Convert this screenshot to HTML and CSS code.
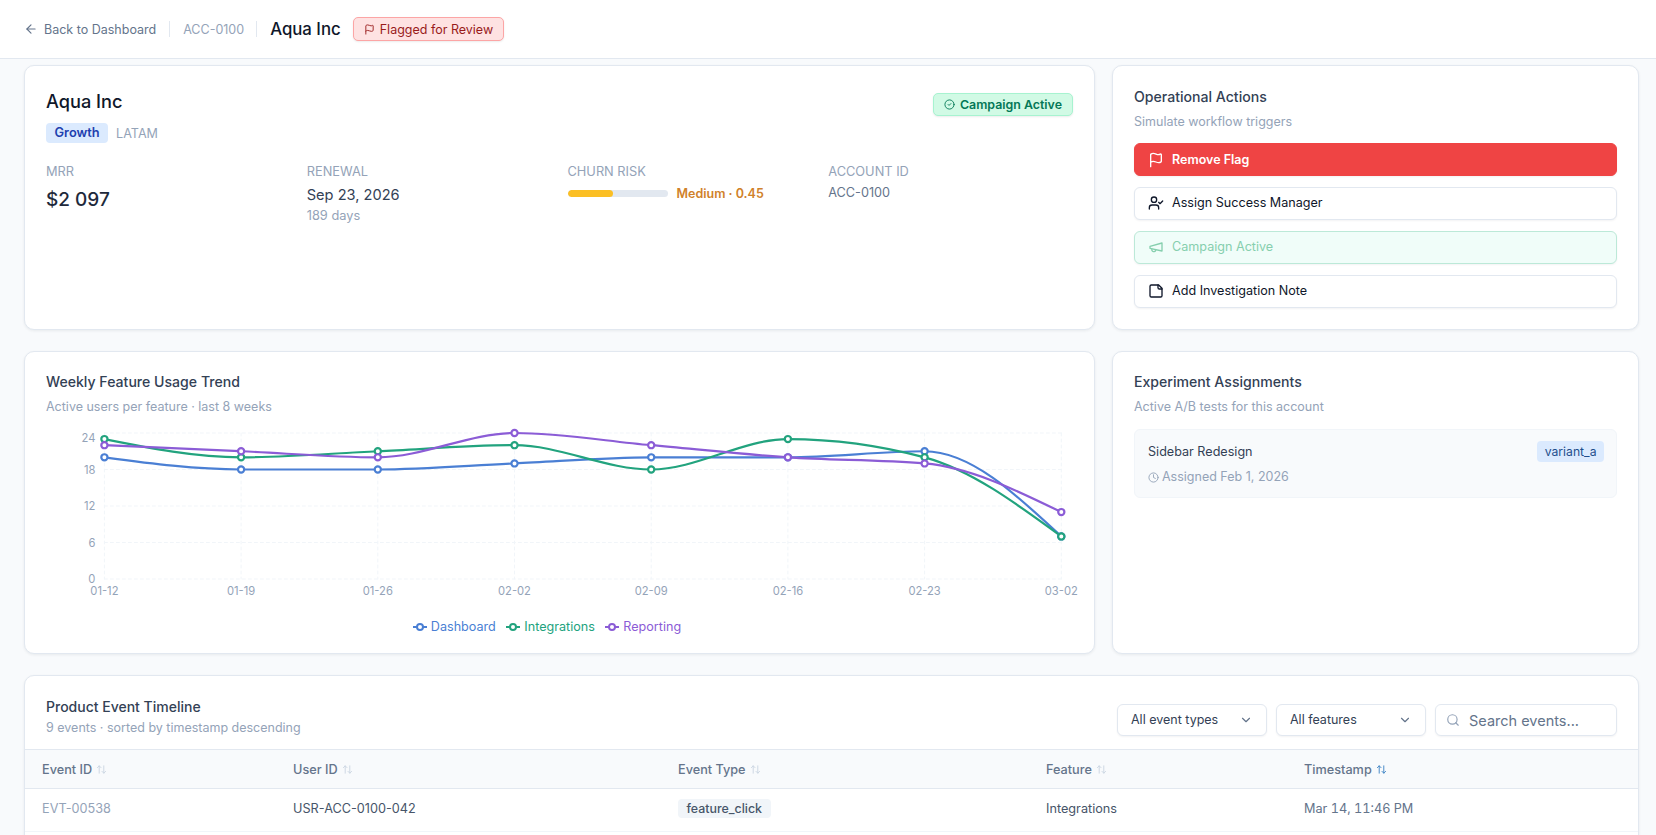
FILE: index.html
```html
<!DOCTYPE html>
<html lang="en">
<head>
<meta charset="utf-8">
<title>Aqua Inc</title>
<link rel="stylesheet" href="styles.css">
</head>
<body>
<div class="app">
  <header class="topbar">
    <a class="back"><svg class="ic14" viewBox="0 0 24 24"><path d="m12 19-7-7 7-7"/><path d="M19 12H5"/></svg>Back to Dashboard</a>
    <span class="sep sep-first"></span>
    <span class="crumb">ACC-0100</span>
    <span class="sep"></span>
    <h1 class="top-name">Aqua Inc</h1>
    <span class="flag-badge"><svg class="ic11" viewBox="0 0 24 24"><path d="M4 22V4a1 1 0 0 1 .4-.8A6 6 0 0 1 8 2c3 0 5 2 7.333 2q2 0 3.067-.8A1 1 0 0 1 20 4v10a1 1 0 0 1-.4.8A6 6 0 0 1 16 16c-3 0-5-2-8-2a6 6 0 0 0-4 1.528"/></svg>Flagged for Review</span>
  </header>
  <main class="main">
    <div class="row row-top">
      <section class="card account">
        <div class="account-head">
          <div>
            <h2 class="account-name">Aqua Inc</h2>
            <div class="tags"><span class="tier">Growth</span><span class="region">LATAM</span></div>
          </div>
          <span class="camp-badge"><svg class="ic11" viewBox="0 0 24 24"><circle cx="12" cy="12" r="10"/><path d="m9 12 2 2 4-4"/></svg>Campaign Active</span>
        </div>
        <div class="stats">
          <div><div class="label">MRR</div><div class="mrr">$2 097</div></div>
          <div><div class="label">RENEWAL</div><div class="renew">Sep 23, 2026</div><div class="days">189 days</div></div>
          <div><div class="label">CHURN RISK</div><div class="risk"><span class="bar"><span class="bar-fill"></span></span><span class="risk-text">Medium · 0.45</span></div></div>
          <div><div class="label">ACCOUNT ID</div><div class="acc-id">ACC-0100</div></div>
        </div>
      </section>
      <section class="card side">
        <h3 class="title">Operational Actions</h3>
        <p class="sub">Simulate workflow triggers</p>
        <div class="actions">
          <button class="btn btn-red"><svg class="ic16" viewBox="0 0 24 24"><path d="M4 22V4a1 1 0 0 1 .4-.8A6 6 0 0 1 8 2c3 0 5 2 7.333 2q2 0 3.067-.8A1 1 0 0 1 20 4v10a1 1 0 0 1-.4.8A6 6 0 0 1 16 16c-3 0-5-2-8-2a6 6 0 0 0-4 1.528"/></svg>Remove Flag</button>
          <button class="btn"><svg class="ic16" viewBox="0 0 24 24"><path d="M16 21v-2a4 4 0 0 0-4-4H6a4 4 0 0 0-4 4v2"/><circle cx="9" cy="7" r="4"/><path d="m16 11 2 2 4-4"/></svg>Assign Success Manager</button>
          <button class="btn btn-green"><svg class="ic16" viewBox="0 0 24 24"><path d="m3 11 18-5v12L3 14v-3z"/><path d="M11.6 16.8a3 3 0 1 1-5.8-1.6"/></svg>Campaign Active</button>
          <button class="btn"><svg class="ic16" viewBox="0 0 24 24"><path d="M16 3H5a2 2 0 0 0-2 2v14a2 2 0 0 0 2 2h14a2 2 0 0 0 2-2V8Z"/><path d="M15 3v4a2 2 0 0 0 2 2h4"/></svg>Add Investigation Note</button>
        </div>
      </section>
    </div>
    <div class="row row-mid">
      <section class="card trend">
        <h3 class="title">Weekly Feature Usage Trend</h3>
        <p class="sub">Active users per feature · last 8 weeks</p>
        <svg id="chart" class="chart" viewBox="0 0 1028 180"></svg>
        <div class="legend">
          <span class="lg lg-blue"><svg class="lg-ic" viewBox="0 0 14 14"><path d="M0 7h14"/><circle cx="7" cy="7" r="3"/></svg>Dashboard</span>
          <span class="lg lg-green"><svg class="lg-ic" viewBox="0 0 14 14"><path d="M0 7h14"/><circle cx="7" cy="7" r="3"/></svg>Integrations</span>
          <span class="lg lg-purple"><svg class="lg-ic" viewBox="0 0 14 14"><path d="M0 7h14"/><circle cx="7" cy="7" r="3"/></svg>Reporting</span>
        </div>
      </section>
      <section class="card side">
        <h3 class="title">Experiment Assignments</h3>
        <p class="sub">Active A/B tests for this account</p>
        <div class="exp">
          <div class="exp-top"><span class="exp-name">Sidebar Redesign</span><span class="variant">variant_a</span></div>
          <div class="exp-date"><svg class="ic11" viewBox="0 0 24 24"><circle cx="12" cy="12" r="10"/><path d="M12 6v6l4 2"/></svg>Assigned Feb 1, 2026</div>
        </div>
      </section>
    </div>
    <section class="card events">
      <div class="events-head">
        <div>
          <h3 class="title">Product Event Timeline</h3>
          <p class="sub">9 events · sorted by timestamp descending</p>
        </div>
        <div class="filters">
          <div class="select">All event types<svg class="ic14" viewBox="0 0 24 24"><path d="m6 9 6 6 6-6"/></svg></div>
          <div class="select">All features<svg class="ic14" viewBox="0 0 24 24"><path d="m6 9 6 6 6-6"/></svg></div>
          <div class="search"><svg class="ic14" viewBox="0 0 24 24"><circle cx="11" cy="11" r="8"/><path d="m21 21-4.3-4.3"/></svg>Search events...</div>
        </div>
      </div>
      <table class="table">
        <colgroup><col class="c1"><col class="c2"><col class="c3"><col class="c4"><col></colgroup>
        <thead>
          <tr>
            <th>Event ID<svg class="sort" viewBox="0 0 24 24"><path d="m21 16-4 4-4-4"/><path d="M17 20V4"/><path d="m3 8 4-4 4 4"/><path d="M7 4v16"/></svg></th>
            <th>User ID<svg class="sort" viewBox="0 0 24 24"><path d="m21 16-4 4-4-4"/><path d="M17 20V4"/><path d="m3 8 4-4 4 4"/><path d="M7 4v16"/></svg></th>
            <th>Event Type<svg class="sort" viewBox="0 0 24 24"><path d="m21 16-4 4-4-4"/><path d="M17 20V4"/><path d="m3 8 4-4 4 4"/><path d="M7 4v16"/></svg></th>
            <th>Feature<svg class="sort" viewBox="0 0 24 24"><path d="m21 16-4 4-4-4"/><path d="M17 20V4"/><path d="m3 8 4-4 4 4"/><path d="M7 4v16"/></svg></th>
            <th>Timestamp<svg class="sort sort-on" viewBox="0 0 24 24"><path d="m21 16-4 4-4-4"/><path d="M17 20V4"/><path d="m3 8 4-4 4 4"/><path d="M7 4v16"/></svg></th>
          </tr>
        </thead>
        <tbody>
          <tr>
            <td class="muted">EVT-00538</td>
            <td>USR-ACC-0100-042</td>
            <td><span class="type">feature_click</span></td>
            <td>Integrations</td>
            <td class="time">Mar 14, 11:46 PM</td>
          </tr>
        </tbody>
      </table>
    </section>
  </main>
</div>
<script src="chart.js"></script>
</body>
</html>
```
FILE: styles.css
```css
* { box-sizing: border-box; }
html, body { margin: 0; height: 100%; }
body { font-family: Inter, "Noto Sans", "Liberation Sans", sans-serif; color: #1e293b; background: #f8fafc; overflow: hidden; }
h1, h2, h3, p { margin: 0; font-weight: 400; }
svg { display: block; flex: none; fill: none; stroke: currentColor; stroke-width: 2; stroke-linecap: round; stroke-linejoin: round; }
.ic11 { width: 11px; height: 11px; }
.ic14 { width: 14px; height: 14px; }
.ic16 { width: 16px; height: 16px; }
.app { height: 835px; overflow: hidden; }

.topbar { height: 59px; background: #fff; border-bottom: 1px solid #e2e8f0; display: flex; align-items: center; padding: 0 24px; }
.back { display: flex; align-items: center; gap: 6px; font-size: 12.5px; color: #64748b; }
.sep { width: 1px; height: 16px; background: #e2e8f0; margin: 0 13px 0 12px; }
.sep-first { margin-left: 13px; }
.crumb { font-size: 12.5px; color: #94a3b8; }
.top-name { font-size: 16.8px; font-weight: 500; color: #0f172a; margin-right: 12px; }
.flag-badge { display: flex; align-items: center; gap: 5px; height: 24px; padding: 0 10px; font-size: 12.5px; font-weight: 400; color: #991b1b; background: #fee2e2; border: 1px solid #fca5a5; border-radius: 5px; box-shadow: 0 1px 2px rgba(0,0,0,.08); }

.main { padding: 6px 17px 0 24px; display: flex; flex-direction: column; gap: 21px; }
.row { display: grid; grid-template-columns: minmax(0, 1fr) 527px; gap: 17px; }
.row-top { grid-template-rows: 265px; }
.row-mid { grid-template-rows: 303px; }
.card { background: #fff; border: 1px solid #e2e8f0; border-radius: 10px; box-shadow: 0 1px 3px rgba(15,23,42,.07); padding: 21px; min-height: 0; }

.account-head { display: flex; justify-content: space-between; align-items: flex-start; }
.account-name { font-size: 18.2px; font-weight: 500; color: #0f172a; line-height: 28px; }
.tags { display: flex; align-items: center; gap: 8px; margin-top: 8px; }
.tier { padding: 0 8.5px; height: 20px; line-height: 20px; font-size: 12.8px; font-weight: 600; color: #1e40af; background: #dbeafe; border-radius: 4px; }
.region { font-size: 12.6px; color: #94a3b8; }
.camp-badge { display: flex; align-items: center; gap: 5px; height: 23px; margin-top: 6px; padding: 0 10px; font-size: 12.4px; font-weight: 600; color: #047857; background: #d1fae5; border: 1px solid #a7f3d0; border-radius: 5px; box-shadow: 0 1px 2px rgba(0,0,0,.08); }
.stats { display: grid; grid-template-columns: repeat(4, 1fr); gap: 16px; margin-top: 21px; }
.label { font-size: 12.8px; line-height: 16px; color: #94a3b8; }
.mrr { font-size: 19px; font-weight: 500; line-height: 28px; margin-top: 6px; color: #1e293b; }
.renew { font-size: 14.6px; line-height: 20px; margin-top: 5px; color: #334155; }
.days { font-size: 12.8px; line-height: 16px; margin-top: 3px; color: #94a3b8; }
.risk { display: flex; align-items: center; gap: 9px; margin-top: 3px; height: 20px; }
.bar { width: 100px; height: 7px; border-radius: 4px; background: #e2e8f0; overflow: hidden; }
.bar-fill { display: block; width: 45%; height: 100%; background: #fbbf24; border-radius: 4px; }
.risk-text { font-size: 12.5px; font-weight: 600; color: #d0812a; }
.acc-id { font-size: 12.7px; line-height: 20px; margin-top: 3px; color: #64748b; }

.title { font-size: 14.1px; font-weight: 450; line-height: 20px; color: #334155; }
.sub { font-size: 12.5px; line-height: 16px; margin-top: 7px; color: #94a3b8; }
.row-mid .title { margin-top: -1px; }

.actions { display: flex; flex-direction: column; gap: 11px; margin-top: 13px; }
.btn { height: 33px; display: flex; align-items: center; gap: 8px; padding: 0 13px 2px; font: 400 12.6px Inter, sans-serif; color: #0f172a; background: #fff; border: 1px solid #e2e8f0; border-radius: 6px; box-shadow: 0 1px 2px rgba(15,23,42,.05); }
.btn-red { color: #fff; background: #ef4444; border-color: #ef4444; font-weight: 600; font-size: 12.5px; padding-bottom: 0; }
.btn-green { color: #86cfae; background: #f0fdf9; border-color: #bce9d8; }

.chart { width: 1028px; height: 180px; margin-top: 10px; overflow: visible; }
.grid-line { stroke: #f1f5f9; stroke-width: 1; stroke-dasharray: 3 3; }
.axis { fill: #94a3b8; stroke: none; font: 11.2px Inter, sans-serif; }
.series { stroke-width: 2.2; fill: none; }
.dot { stroke-width: 2.2; fill: #fff; }
.s-blue { stroke: #4a7fd4; color: #4a7fd4; }
.s-green { stroke: #22a37e; color: #22a37e; }
.s-purple { stroke: #8b5cd6; color: #8b5cd6; }
.legend { display: flex; justify-content: center; gap: 10.5px; margin-top: 12px; font-size: 12.6px; line-height: 20px; padding-right: 25px; }
.lg { display: flex; align-items: center; gap: 4px; }
.lg-ic { width: 14px; height: 14px; stroke-width: 2; }
.lg-ic circle { fill: #fff; }
.lg-blue { color: #4a7fd4; }
.lg-green { color: #22a37e; }
.lg-purple { color: #8b5cd6; }

.exp { height: 69px; margin-top: 14px; padding: 11px 12px 0 13px; background: #f8fafc; border: 1px solid #f1f5f9; border-radius: 6px; }
.exp-top { display: flex; justify-content: space-between; align-items: center; height: 20px; }
.exp-name { font-size: 12.6px; font-weight: 400; color: #334155; }
.variant { padding: 0 7.5px; height: 21px; line-height: 21px; font-size: 12.2px; color: #1e4e8c; background: #dbeafe; border-radius: 4px; }
.exp-date { display: flex; align-items: center; gap: 3px; margin-top: 6px; font-size: 12.5px; line-height: 20px; color: #94a3b8; }

.events { padding: 0; height: 300px; overflow: hidden; }
.events-head { height: 73px; display: flex; justify-content: space-between; align-items: flex-start; padding: 28px 21px 0; }
.events-head .title { margin-top: -7px; font-size: 14px; }
.events-head .sub { margin-top: 3px; }
.filters { display: flex; gap: 9px; }
.select, .search { height: 32px; display: flex; align-items: center; background: #fff; border: 1px solid #e2e8f0; border-radius: 6px; box-shadow: 0 1px 2px rgba(15,23,42,.05); }
.select { width: 150px; justify-content: space-between; padding: 0 13px; font-size: 12.5px; line-height: 28px; color: #334155; }
.select svg { color: #64748b; }
.search { width: 182px; gap: 9px; padding: 0 10px; font-size: 14.5px; color: #64748b; }
.search svg { color: #94a3b8; }
.table { width: 100%; border-collapse: collapse; table-layout: fixed; font-size: 12.7px; }
.c1 { width: 251px; }
.c2 { width: 385px; }
.c3 { width: 368px; }
.c4 { width: 258px; }
th { height: 39px; padding: 0 0 0 17px; text-align: left; font-weight: 500; color: #64748b; background: #f8fafc; border-top: 1px solid #e2e8f0; border-bottom: 1px solid #e2e8f0; }
th svg { display: inline-block; vertical-align: -1px; margin-left: 4px; }
.sort { width: 11px; height: 11px; color: #cbd5e1; }
.sort-on { color: #3b82c4; }
td { height: 43px; padding: 0 0 3px 17px; color: #475569; border-bottom: 1px solid #f1f5f9; vertical-align: middle; }
td.muted { color: #94a3b8; }
td.time { color: #64748b; font-variant-numeric: tabular-nums; }
.type { display: inline-block; vertical-align: middle; padding: 0 8.5px; height: 19px; line-height: 19px; font-size: 12.4px; font-weight: 500; color: #475569; background: #f1f5f9; border-radius: 4px; }
```
FILE: chart.js
```js
(function () {
  var NS = "http://www.w3.org/2000/svg";
  var svg = document.getElementById("chart");
  var labels = ["01-12", "01-19", "01-26", "02-02", "02-09", "02-16", "02-23", "03-02"];
  var series = [
    { cls: "s-blue", data: [20, 18, 18, 19, 20, 20, 21, 7] },
    { cls: "s-green", data: [23, 20, 21, 22, 18, 23, 20, 7] },
    { cls: "s-purple", data: [22, 21, 20, 24, 22, 20, 19, 11] }
  ];
  var x0 = 58.4, step = 136.7, y0 = 154, unit = 6.083;
  function X(i) { return x0 + step * i; }
  function Y(v) { return y0 - unit * v; }
  function el(name, attrs, parent, text) {
    var n = document.createElementNS(NS, name);
    for (var k in attrs) n.setAttribute(k, attrs[k]);
    if (text != null) n.textContent = text;
    (parent || svg).appendChild(n);
    return n;
  }
  [0, 6, 12, 18, 24].forEach(function (v) {
    el("line", { "class": "grid-line", x1: X(0), x2: X(7), y1: Y(v), y2: Y(v) });
    el("text", { "class": "axis", x: X(0) - 9, y: (v === 24 ? Y(v) + 5 : Y(v)) + 4, "text-anchor": "end" }, svg, String(v));
  });
  labels.forEach(function (l, i) {
    el("line", { "class": "grid-line", x1: X(i), x2: X(i), y1: Y(24), y2: Y(0) });
    el("text", { "class": "axis", x: X(i), y: Y(0) + 16, "text-anchor": "middle" }, svg, l);
  });
  function sign(n) { return n < 0 ? -1 : 1; }
  function tangents(d) {
    var t = [], n = d.length;
    for (var i = 1; i < n - 1; i++) {
      var a = d[i] - d[i - 1], b = d[i + 1] - d[i], p = (a + b) / 2;
      t[i] = (sign(a) + sign(b)) * Math.min(Math.abs(a), Math.abs(b), 0.5 * Math.abs(p));
    }
    t[0] = (3 * (d[1] - d[0]) - t[1]) / 2;
    t[n - 1] = (3 * (d[n - 1] - d[n - 2]) - t[n - 2]) / 2;
    return t;
  }
  series.forEach(function (s) {
    var t = tangents(s.data), path = "M" + X(0) + " " + Y(s.data[0]);
    for (var i = 0; i < s.data.length - 1; i++) {
      path += "C" + (X(i) + step / 3) + " " + Y(s.data[i] + t[i] / 3) + " " +
        (X(i + 1) - step / 3) + " " + Y(s.data[i + 1] - t[i + 1] / 3) + " " +
        X(i + 1) + " " + Y(s.data[i + 1]);
    }
    el("path", { "class": "series " + s.cls, d: path });
  });
  series.forEach(function (s) {
    s.data.forEach(function (v, i) {
      el("circle", { "class": "dot " + s.cls, cx: X(i), cy: Y(v), r: 3.1 });
    });
  });
})();
```
